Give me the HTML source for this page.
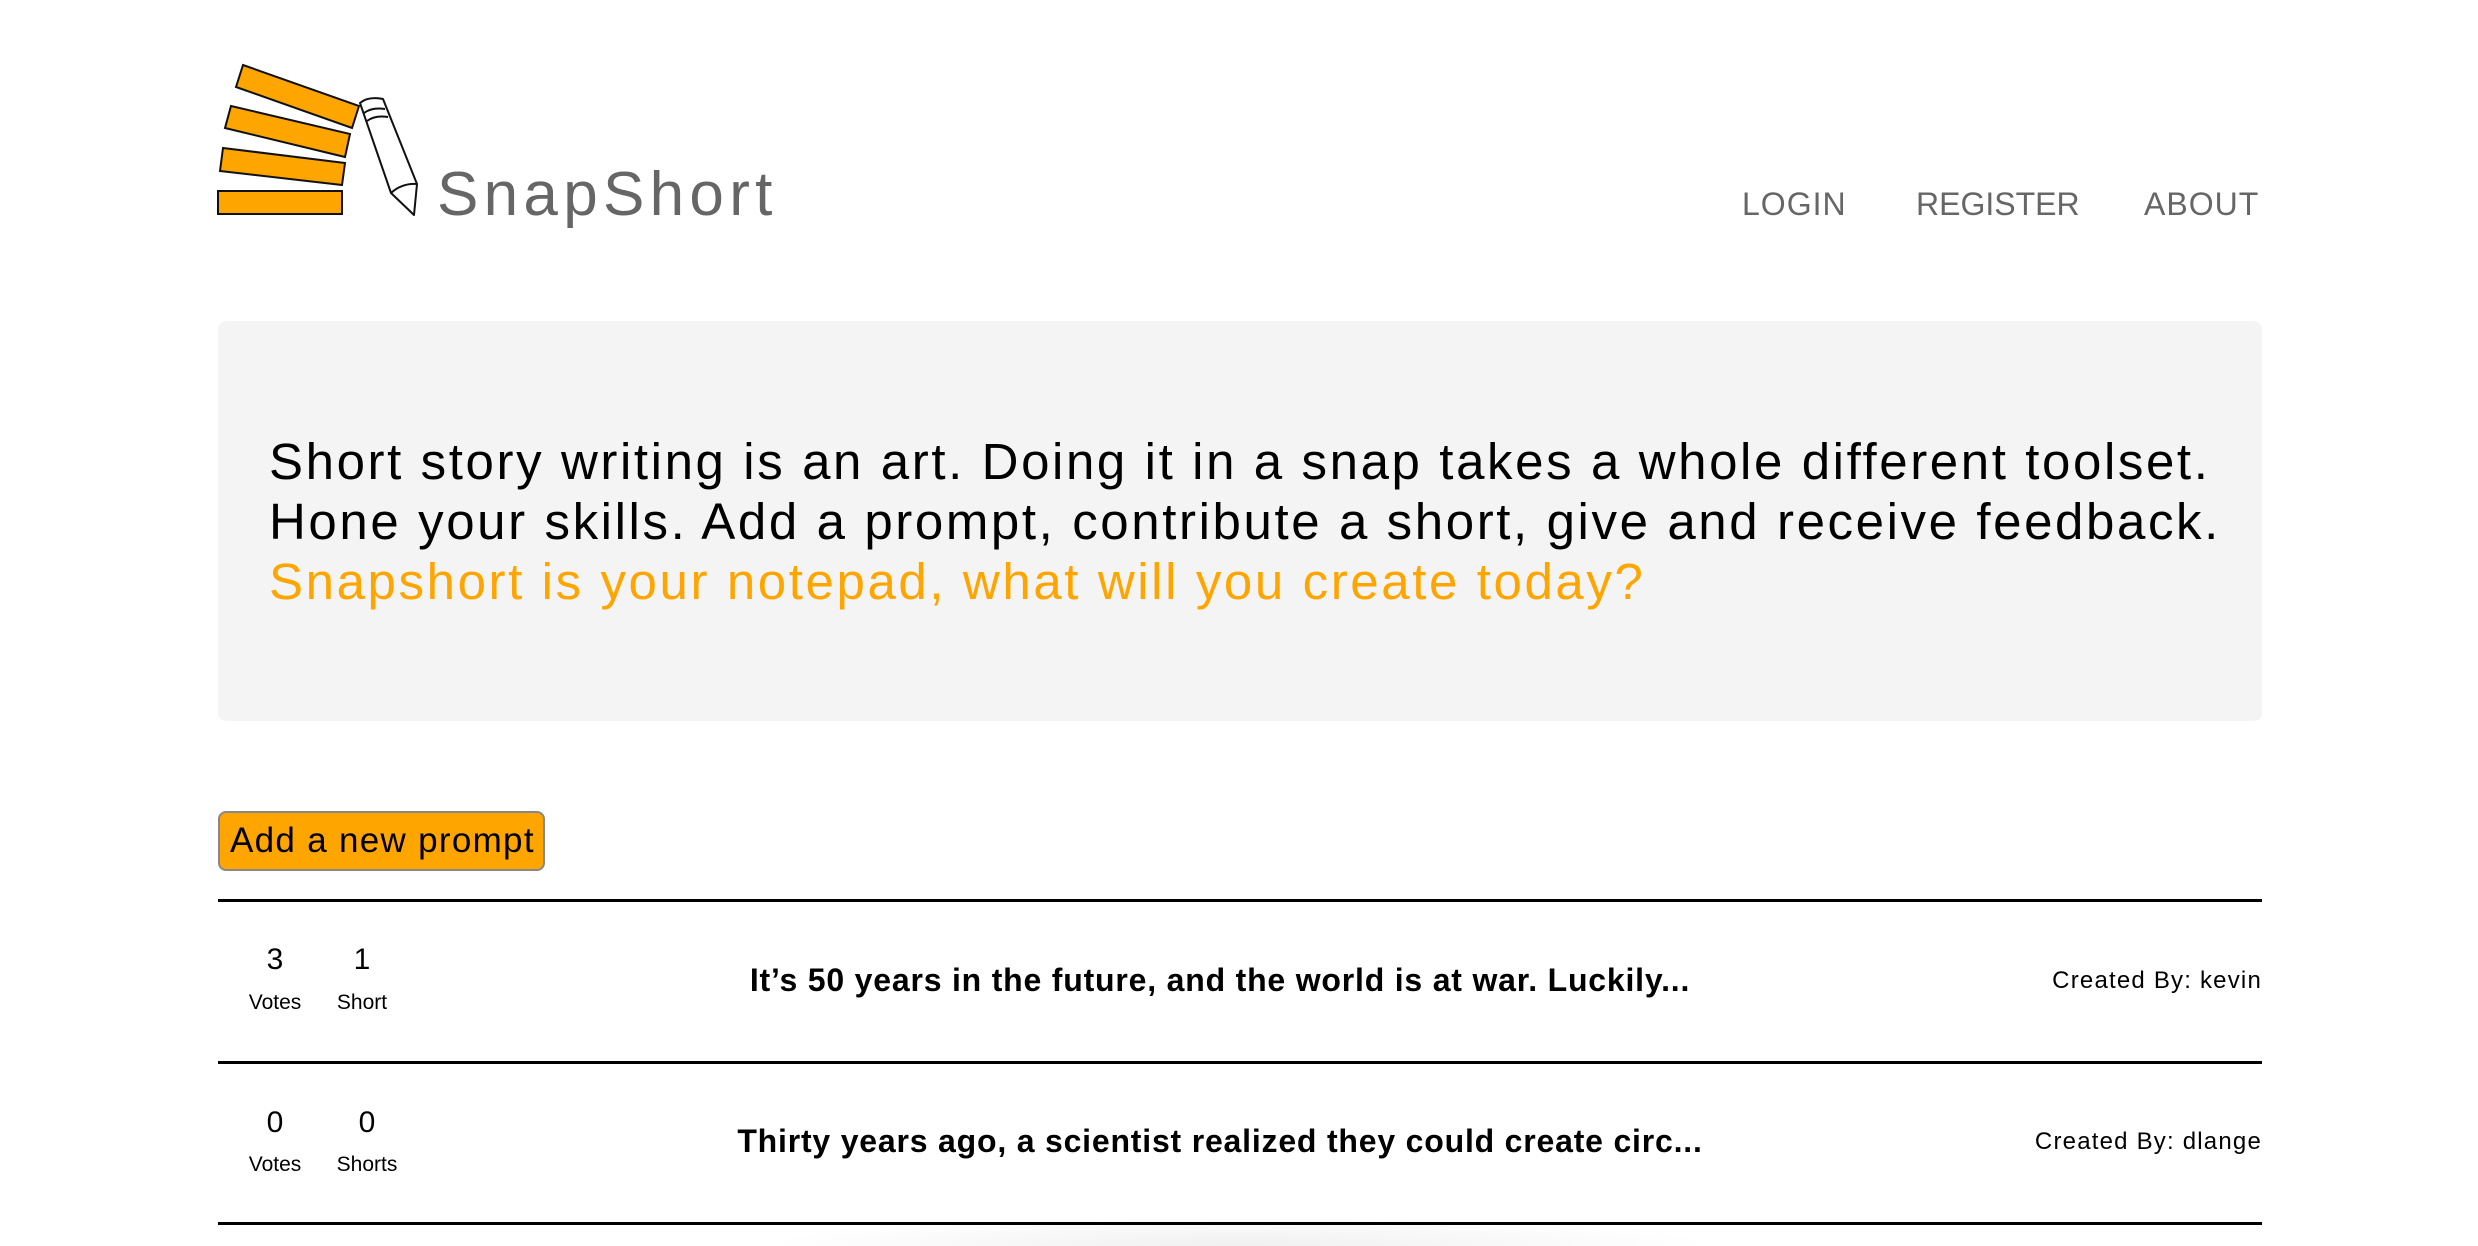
<!DOCTYPE html>
<html><head><meta charset="utf-8"><style>
*{margin:0;padding:0;box-sizing:border-box}
html,body{width:2478px;height:1246px;background:#fff;overflow:hidden;font-family:"Liberation Sans",sans-serif;position:relative}
.a{position:absolute;white-space:nowrap}
.nav{font-size:32px;color:#666;top:184px;line-height:40px;letter-spacing:1px}
.hero{left:218px;top:321px;width:2044px;height:400px;background:#f4f4f4;border-radius:8px}
.ht{left:269px;font-size:51px;line-height:60px;color:#000;letter-spacing:2.6px}
.btn{left:218px;top:811px;width:327px;height:60px;background:#ffa500;border:2px solid #888;border-radius:8px;font-size:35px;line-height:56px;padding-left:10px;color:#000;letter-spacing:1.3px}
.hr{left:218px;width:2044px;height:3px;background:#000}
.num{font-size:30px;text-align:center;width:80px;line-height:36px}
.lab{font-size:21px;text-align:center;width:100px;line-height:24px}
.pr{font-size:32px;font-weight:bold;width:1100px;left:670px;text-align:center;line-height:40px;letter-spacing:0.8px}
.cb{font-size:24px;right:216px;line-height:30px;letter-spacing:1.2px}
</style></head><body>
<svg class="a" style="left:0;top:0" width="800" height="260" viewBox="0 0 800 260">
<g fill="#ffa500" stroke="#111" stroke-width="2">
<polygon points="243,65 359,106 352,128 236,87"/>
<polygon points="231,106 350,134 345,157 225,128"/>
<polygon points="223,148 345,163 342,185 220,171"/>
<rect x="218" y="191" width="124" height="23"/>
</g>
<g fill="#fff" stroke="#111" stroke-width="2" stroke-linejoin="round">
<path d="M360,103 Q368,96 383,99 L417,184 L414,215 L391,193 Z"/>
<path d="M364,113 Q372,107 385,109 M367,121 Q375,115 388,117 M391,193 Q402,183 417,184" fill="none"/>
</g>
<text x="437" y="215" font-family="Liberation Sans, sans-serif" font-size="62" fill="#666" letter-spacing="5.3">SnapShort</text>
</svg>
<div class="a nav" style="left:1742px">LOGIN</div>
<div class="a nav" style="left:1916px;letter-spacing:0">REGISTER</div>
<div class="a nav" style="left:2144px">ABOUT</div>
<div class="a hero"></div>
<div class="a ht" style="top:432px">Short story writing is an art. Doing it in a snap takes a whole different toolset.</div>
<div class="a ht" style="top:492px">Hone your skills. Add a prompt, contribute a short, give and receive feedback.</div>
<div class="a ht" style="top:552px;color:#ffa500">Snapshort is your notepad, what will you create today?</div>
<div class="a btn">Add a new prompt</div>
<div class="a hr" style="top:899px"></div>
<div class="a hr" style="top:1061px"></div>
<div class="a hr" style="top:1222px"></div>
<div class="a num" style="left:235px;top:942px">3</div>
<div class="a num" style="left:322px;top:942px">1</div>
<div class="a lab" style="left:225px;top:991px">Votes</div>
<div class="a lab" style="left:312px;top:991px">Short</div>
<div class="a pr" style="top:960px">It’s 50 years in the future, and the world is at war. Luckily...</div>
<div class="a cb" style="top:966px">Created By: kevin</div>
<div class="a num" style="left:235px;top:1105px">0</div>
<div class="a num" style="left:327px;top:1105px">0</div>
<div class="a lab" style="left:225px;top:1153px">Votes</div>
<div class="a lab" style="left:317px;top:1153px">Shorts</div>
<div class="a pr" style="top:1121px">Thirty years ago, a scientist realized they could create circ...</div>
<div class="a cb" style="top:1127px">Created By: dlange</div>
<div class="a" style="left:760px;top:1215px;width:960px;height:60px;border-radius:50%;background:radial-gradient(ellipse at center,rgba(0,0,0,0.06),rgba(0,0,0,0) 70%)"></div>
</body></html>
